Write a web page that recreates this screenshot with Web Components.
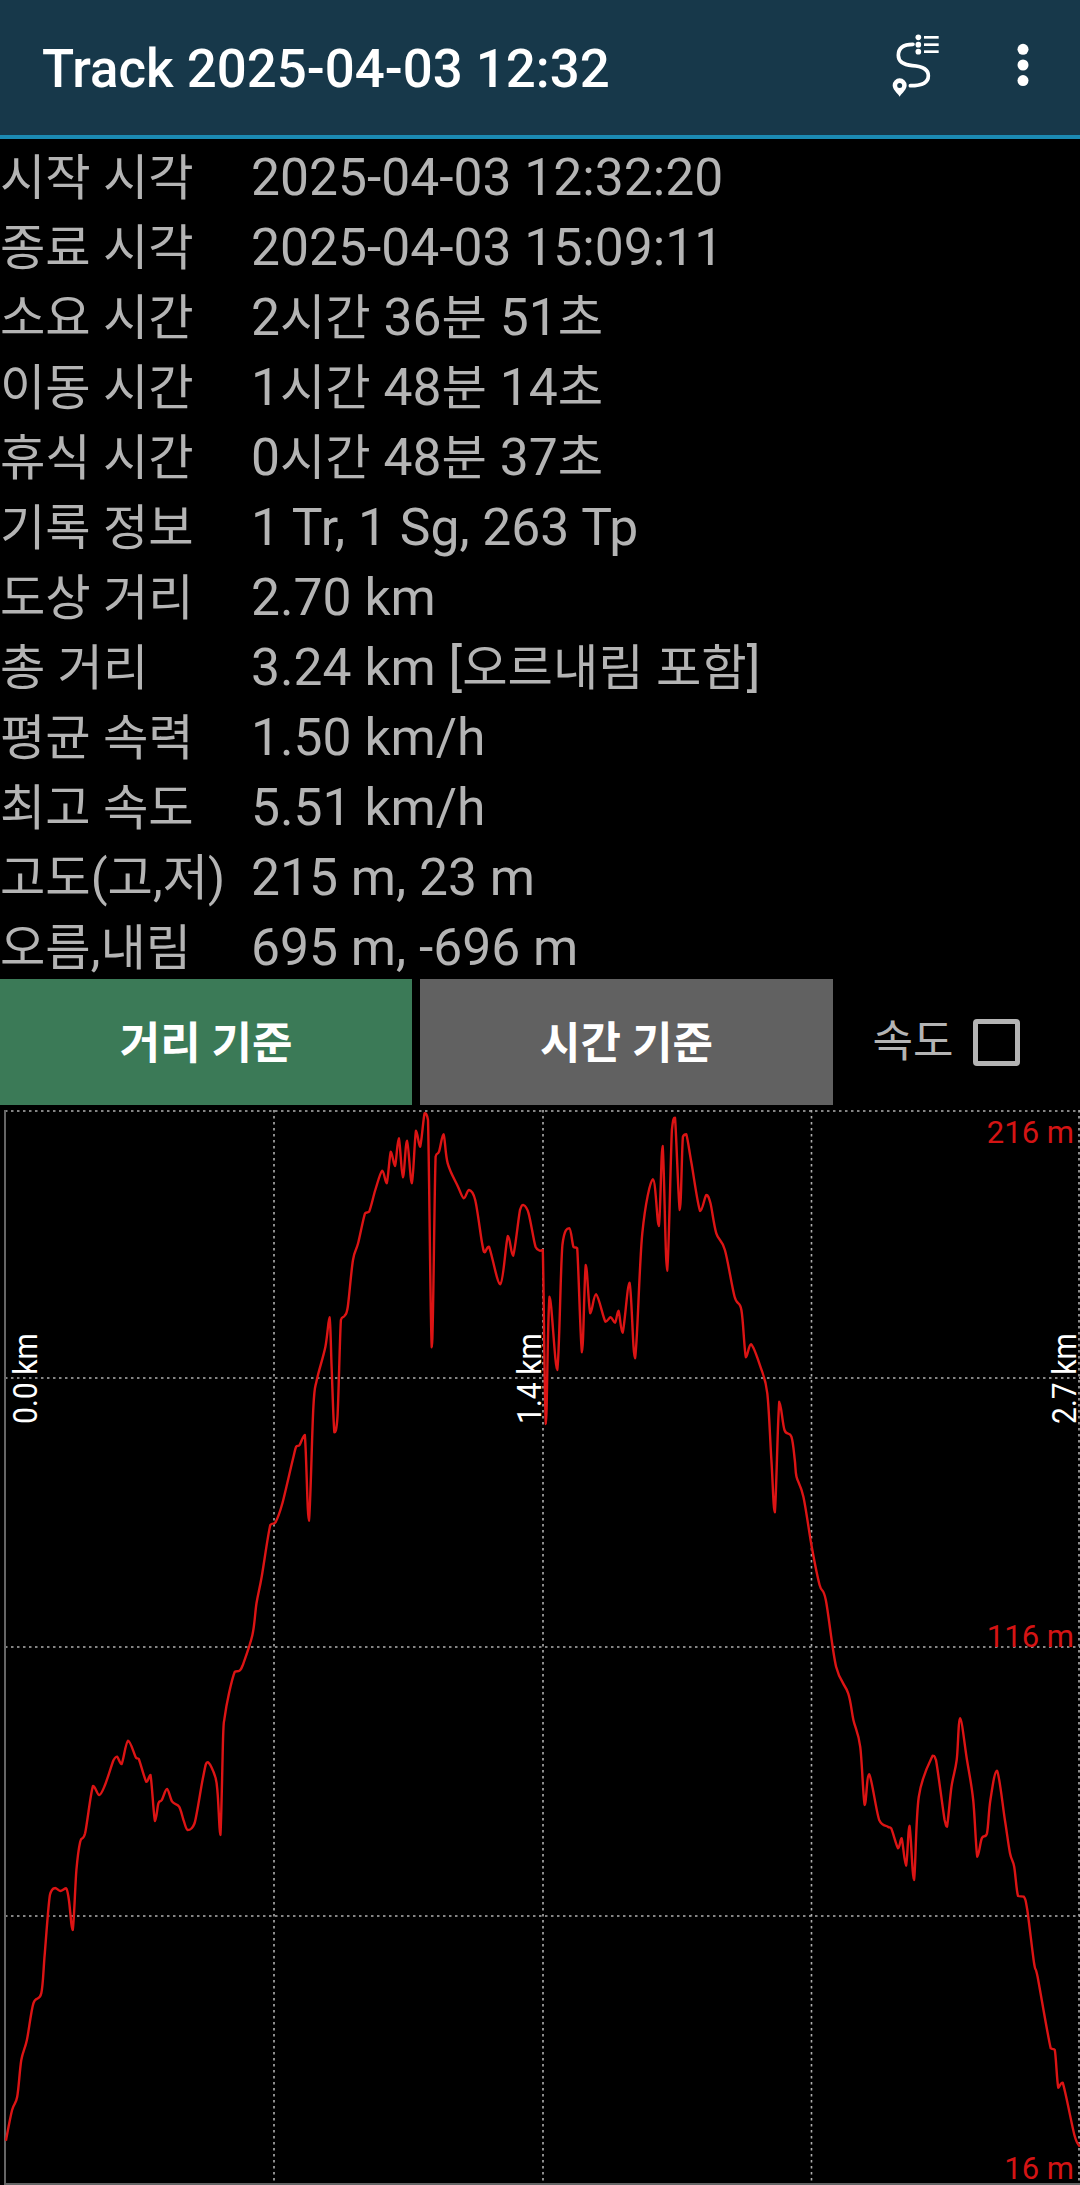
<!DOCTYPE html>
<html lang="ko">
<head>
<meta charset="utf-8">
<title>Track 2025-04-03 12:32</title>
<style>
html,body{margin:0;padding:0;background:#000}
body{width:1080px;font-family:Roboto,"Noto Sans CJK KR",sans-serif}
stat-row i{font-style:normal;font-size:49.300px}
</style>
</head>
<body>
<app-header title-text="Track 2025-04-03 12:32"></app-header>
<stat-table>
  <stat-row label="시작 시각">2025-04-03 12:32:20</stat-row>
  <stat-row label="종료 시각">2025-04-03 15:09:11</stat-row>
  <stat-row label="소요 시간">2<i>시간</i> 36<i>분</i> 51<i>초</i></stat-row>
  <stat-row label="이동 시간">1<i>시간</i> 48<i>분</i> 14<i>초</i></stat-row>
  <stat-row label="휴식 시간">0<i>시간</i> 48<i>분</i> 37<i>초</i></stat-row>
  <stat-row label="기록 정보">1 Tr, 1 Sg, 263 Tp</stat-row>
  <stat-row label="도상 거리">2.70 km</stat-row>
  <stat-row label="총 거리">3.24 km [<i>오르내림 포함</i>]</stat-row>
  <stat-row label="평균 속력">1.50 km/h</stat-row>
  <stat-row label="최고 속도">5.51 km/h</stat-row>
  <stat-row label="고도(고,저)">215 m, 23 m</stat-row>
  <stat-row label="오름,내림">695 m, -696 m</stat-row>
</stat-table>
<mode-bar>
  <mode-button color="#3b7a57">거리 기준</mode-button>
  <mode-button color="#616161">시간 기준</mode-button>
  <check-toggle>속도</check-toggle>
</mode-bar>
<elevation-chart></elevation-chart>
<script>
function define(name, html, setup){
  customElements.define(name, class extends HTMLElement{
    constructor(){
      super();
      this.attachShadow({mode:'open'}).innerHTML = html;
      if(setup) setup(this, this.shadowRoot);
    }
  });
}
define('app-header', `
<style>
:host{display:flex;align-items:center;box-sizing:border-box;height:139px;background:#17384a;border-bottom:4px solid #1b8ab3;color:#fff}
.t{flex:1;padding-left:42px;padding-top:3px;font:500 52.800px/1 Roboto,"Noto Sans CJK KR",sans-serif;white-space:nowrap}
svg{display:block;margin-bottom:5px}
.route{margin-right:71px}
.more{margin-right:46px}
</style>
<div class="t"></div>
<svg class="route" width="50" height="65" viewBox="150 70 150 195" fill="#fff">
  <path d="M216 104C190 104 172 114 172 137C172 158 190 166 214 168C244 170 262 178 262 198C262 218 244 228 208 228" fill="none" stroke="#fff" stroke-width="11" stroke-linecap="round"/>
  <circle cx="232" cy="83" r="8.5"/><circle cx="232" cy="105" r="8.5"/><circle cx="232" cy="126" r="8.5"/>
  <rect x="249" y="79" width="44" height="8"/><rect x="249" y="101" width="44" height="8"/><rect x="249" y="122" width="44" height="8"/>
  <path fill-rule="evenodd" d="M176 261C168 249 155 240 155 227A21 21 0 0 1 197 227C197 240 184 249 176 261ZM176 220A7.500 7.500 0 1 0 176 235A7.500 7.500 0 1 0 176 220Z"/>
</svg>
<svg class="more" width="22" height="60" viewBox="0 0 22 60" fill="#fff">
  <circle cx="11" cy="14.300" r="5.500"/><circle cx="11" cy="30" r="5.500"/><circle cx="11" cy="45.600" r="5.500"/>
</svg>`, (el, r)=>{ r.querySelector('.t').textContent = el.getAttribute('title-text'); });

define('stat-table', `<style>:host{display:block}</style><slot></slot>`);

define('stat-row', `
<style>
:host{display:flex;box-sizing:border-box;height:70px;padding-top:8px;align-items:center;color:#b4b4b4;font:400 51.600px/62px Roboto,"Noto Sans CJK KR",sans-serif;white-space:nowrap}
.l{width:251px;flex:none;font-size:49.300px}
</style>
<span class="l"></span><span><slot></slot></span>`, (el, r)=>{ r.querySelector('.l').textContent = el.getAttribute('label'); });

define('mode-bar', `
<style>:host{display:flex;height:126px;gap:8px;margin-bottom:5px}</style><slot></slot>`);

define('mode-button', `
<style>
:host{display:flex;align-items:center;justify-content:center;width:412.300px;flex:none;padding-top:4px;box-sizing:border-box;color:#fff;font:700 44px/1 Roboto,"Noto Sans CJK KR",sans-serif;white-space:nowrap}
</style><slot></slot>`, (el)=>{ el.style.background = el.getAttribute('color'); });

define('check-toggle', `
<style>
:host{display:flex;align-items:center;margin-left:32px;color:#b4b4b4;font:400 44px/1 Roboto,"Noto Sans CJK KR",sans-serif;white-space:nowrap}
.b{box-sizing:border-box;width:47px;height:47px;border:5px solid #b4b4b4;border-radius:4px;margin-left:19px}
</style><slot></slot><span class="b"></span>`);

const SECTIONS = [
 [0,1820,'17,962 35,870 50,830 62,720 78,660 97,550 120,520 130,400 145,225 160,204 175,213 192,205 200,240 211,330 222,150 233,65 247,40'],
 [0,1460,'270,978 288,1005 305,975 330,900 340,890 353,912 372,842 395,893 403,897 425,965 437,945 450,1083 460,1030 470,1020 485,987 500,1025 520,1040 533,1080'],
 [0,1820,'545,30 565,10'],
 [0,1460,'590,950 603,907 625,950 632,1000'],
 [0,1820,'640,45'],
 [0,1460,'648,830 652,775 665,700 682,635 695,632 705,615 733,525 745,430 760,350 785,195 800,187 820,130 850,0'],
 [0,1100,'860,1040 870,1035 885,1005'],
 [0,1460,'897,182'],
 [0,1100,'910,920 920,840 945,740 957,652 963,800 971,997 980,950 990,660 1000,648 1010,620 1025,480 1040,430 1060,340 1072,335 1090,270 1110,212 1123,250 1135,155 1147,198 1158,115 1170,232 1182,122 1196,250 1208,92 1220,140 1233,40 1243,60 1254,742 1265,170 1275,155 1288,103 1300,190 1330,260 1347,295 1362,270 1380,300 1400,430 1408,457 1420,440 1453,553 1475,408 1490,467 1510,330 1520,315 1535,340 1555,440'],
 [540,1100,'0,452 8,450 17,972 28,590 50,810 65,435 85,385 97,440 108,445 122,757 133,495 146,640 163,583 190,665 205,652 218,668 228,632 240,698 260,548 276,775 297,400 328,238 345,378 356,138 369,512 383,90 392,53 406,330 415,110 425,103 440,190 465,333 483,285 495,310 512,400 537,450 565,590 585,630 598,772 613,733 640,800 660,880 672,1080'],
 [540,1460,'682,157'],
 [540,1100,'695,905 710,990 730,1010 740,1080'],
 [540,1460,'745,50 765,110 790,265 812,375 830,420 860,620 895,700 910,780 930,860 943,1035 956,943 985,1080'],
 [540,1820,'1010,20 1020,25 1040,85 1050,55 1063,137 1073,17 1086,180'],
 [540,1460,'1100,1010 1140,887 1150,900 1175,1080'],
 [540,1820,'1182,20'],
 [540,1460,'1195,980 1210,900 1220,775 1240,900 1258,1020'],
 [540,1820,'1270,110 1283,55 1298,40'],
 [540,1460,'1308,1020 1327,932 1350,1080'],
 [540,1820,'1365,100 1377,140 1388,228 1405,230 1415,270 1435,430 1445,470 1483,685 1495,690 1505,803 1518,788 1552,945 1568,980']
];
function profilePath(){
  const p=[];
  SECTIONS.forEach(([ox,oy,s])=>s.split(' ').forEach(q=>{
    const [x,y]=q.split(',').map(Number);
    p.push([ox+x/2.904, oy+y/3]);
  }));
  const f=n=>n.toFixed(1);
  let d=`M${f(p[0][0])} ${f(p[0][1])}`;
  const clamp=(v,a,b)=>Math.max(Math.min(a,b),Math.min(Math.max(a,b),v));
  for(let i=0;i<p.length-1;i++){
    const a=p[i-1]||p[i], b=p[i], c=p[i+1], e=p[i+2]||c;
    const x1=b[0]+(c[0]-a[0])/6, y1=clamp(b[1]+(c[1]-a[1])/6,b[1],c[1]);
    const x2=c[0]-(e[0]-b[0])/6, y2=clamp(c[1]-(e[1]-b[1])/6,b[1],c[1]);
    d+=`C${f(x1)} ${f(y1)} ${f(x2)} ${f(y2)} ${f(c[0])} ${f(c[1])}`;
  }
  return d;
}
define('elevation-chart', `
<style>
:host{display:block;height:1075px}
svg{display:block}
text{font-family:Roboto,sans-serif;font-size:31px}
.g{stroke:#b0b0b0;stroke-width:1.600;stroke-dasharray:2.500 3.500;fill:none}
.x{fill:#fff}
.y{fill:#d41414;text-anchor:end}
</style>
<svg width="1080" height="1075" viewBox="0 1110 1080 1075">
  <path class="g" d="M5 1111H1080M5 1378H1080M5 1647H1080M5 1916H1080"/>
  <path class="g" d="M274 1110V2184M543 1110V2184M811.500 1110V2184M1079 1110V2184"/>
  <path d="M5 1110V2185M5 2184H1080" fill="none" stroke="#666" stroke-width="2"/>
  <path id="line" fill="none" stroke="#dc1414" stroke-width="2.400" stroke-linejoin="round"/>
  <text class="x" transform="translate(37 1424) rotate(-90) scale(.97 1.06)">0.0 km</text>
  <text class="x" transform="translate(541 1424) rotate(-90) scale(.97 1.06)">1.4 km</text>
  <text class="x" transform="translate(1076 1424) rotate(-90) scale(.97 1.06)">2.7 km</text>
  <text class="y" x="1074" y="1143">216 m</text>
  <text class="y" x="1074" y="1647">116 m</text>
  <text class="y" x="1074" y="2178.500">16 m</text>
</svg>`, (el,r)=>{ r.getElementById('line').setAttribute('d', profilePath()); });
</script>
</body>
</html>
